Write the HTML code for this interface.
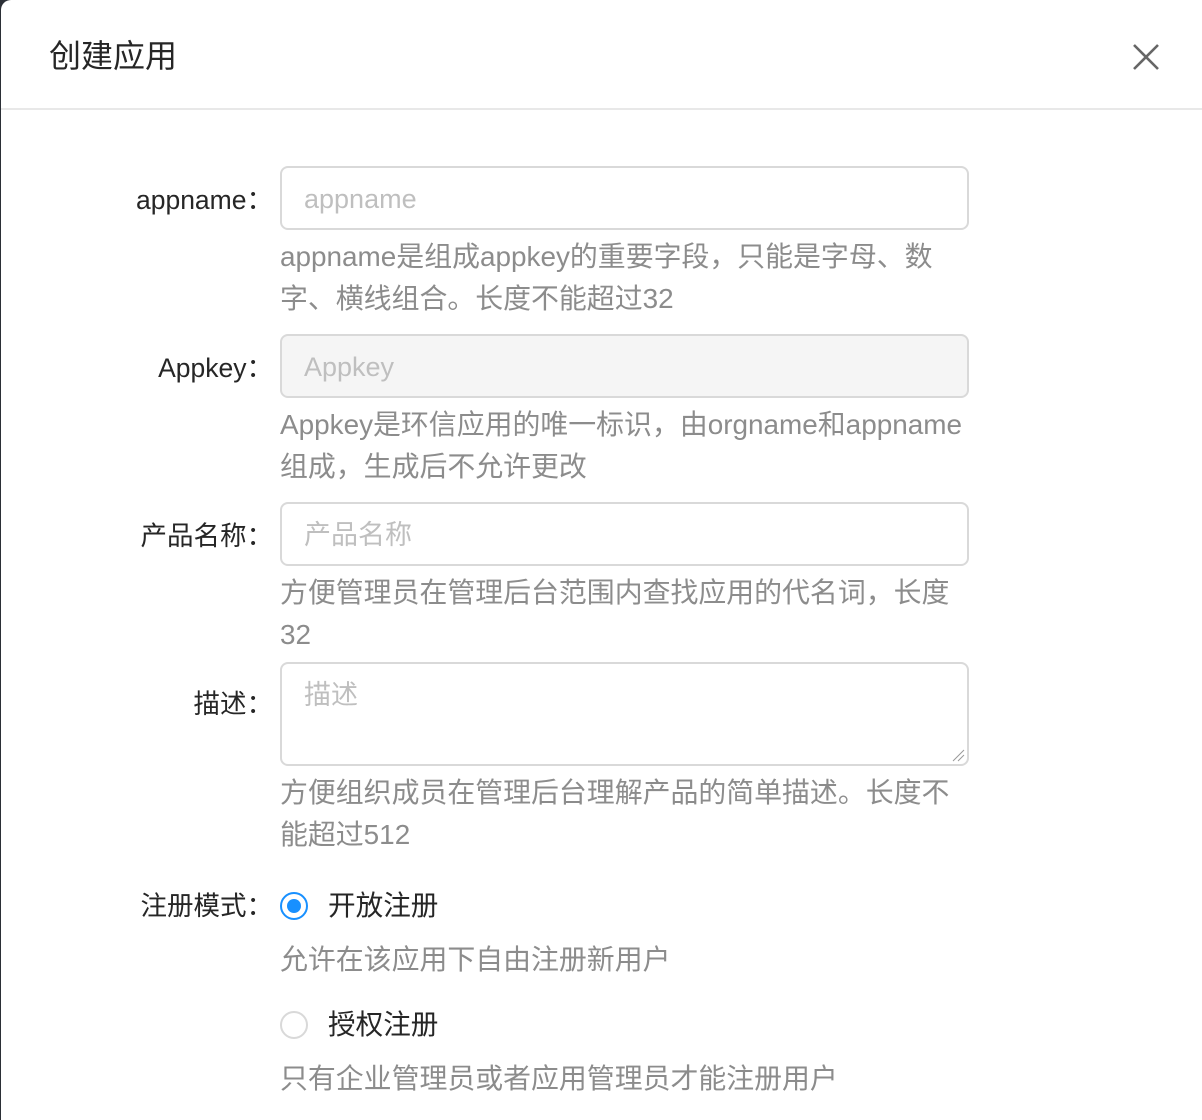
<!DOCTYPE html>
<html><head><meta charset="utf-8"><style>
html,body{margin:0;padding:0;width:1202px;height:1110px;overflow:hidden;background:#2b2f36;}
.m{position:absolute;left:1px;top:0;width:1210px;height:1120px;background:#fff;border-radius:10px 0 0 0;font-family:"Liberation Sans","Noto Sans CJK SC",sans-serif;}
.hd{position:absolute;left:0;top:0;right:0;height:108px;border-bottom:2px solid #e8e8e8;}
.t{position:absolute;left:48px;top:36px;font-size:32px;color:#262626;line-height:40px;}
.x{position:absolute;left:1131px;top:43px;}
.lb{position:absolute;right:938px;font-size:26.5px;color:#262626;line-height:40px;white-space:nowrap;}
.in{position:absolute;left:279px;width:689px;border:2px solid #d9d9d9;border-radius:8px;font-size:27px;color:#bfbfbf;box-sizing:border-box;padding-left:22px;}
.h{position:absolute;left:279px;width:720px;font-size:27.9px;color:#8c8c8c;line-height:42px;white-space:nowrap;}
.r{position:absolute;left:279px;width:28px;height:28px;border-radius:50%;box-sizing:border-box;}
.rt{position:absolute;left:327px;font-size:27.6px;color:#262626;line-height:40px;}
</style></head><body><div class="m">
<div class="hd"><div class="t">创建应用</div>
<svg class="x" width="28" height="28" viewBox="0 0 28 28"><path d="M2 2L26 26M26 2L2 26" stroke="#666" stroke-width="2.6"/></svg></div>

<div class="lb" style="top:180px">appname：</div>
<div class="in" style="top:166px;height:64px;line-height:62px">appname</div>
<div class="h" style="top:236px">appname是组成appkey的重要字段，只能是字母、数<br>字、横线组合。长度不能超过32</div>

<div class="lb" style="top:348px">Appkey：</div>
<div class="in" style="top:334px;height:64px;line-height:62px;background:#f5f5f5">Appkey</div>
<div class="h" style="top:404px">Appkey是环信应用的唯一标识，由orgname和appname<br>组成，生成后不允许更改</div>

<div class="lb" style="top:516px">产品名称：</div>
<div class="in" style="top:502px;height:64px;line-height:62px">产品名称</div>
<div class="h" style="top:572px">方便管理员在管理后台范围内查找应用的代名词，长度<br>32</div>

<div class="lb" style="top:684px">描述：</div>
<div class="in" style="top:662px;height:104px;line-height:62px">描述
<svg style="position:absolute;right:2px;bottom:2px" width="14" height="14"><path d="M2 13L13 2M7 13L13 7" stroke="#999" stroke-width="1"/></svg></div>
<div class="h" style="top:772px">方便组织成员在管理后台理解产品的简单描述。长度不<br>能超过512</div>

<div class="lb" style="top:886px">注册模式：</div>
<div class="r" style="top:892px;border:2px solid #1890ff"><div style="position:absolute;left:5px;top:5px;width:14px;height:14px;border-radius:50%;background:#1890ff"></div></div>
<div class="rt" style="top:886px">开放注册</div>
<div class="h" style="top:939px">允许在该应用下自由注册新用户</div>
<div class="r" style="top:1011px;border:2px solid #d9d9d9"></div>
<div class="rt" style="top:1005px">授权注册</div>
<div class="h" style="top:1058px">只有企业管理员或者应用管理员才能注册用户</div>
</div></body></html>
